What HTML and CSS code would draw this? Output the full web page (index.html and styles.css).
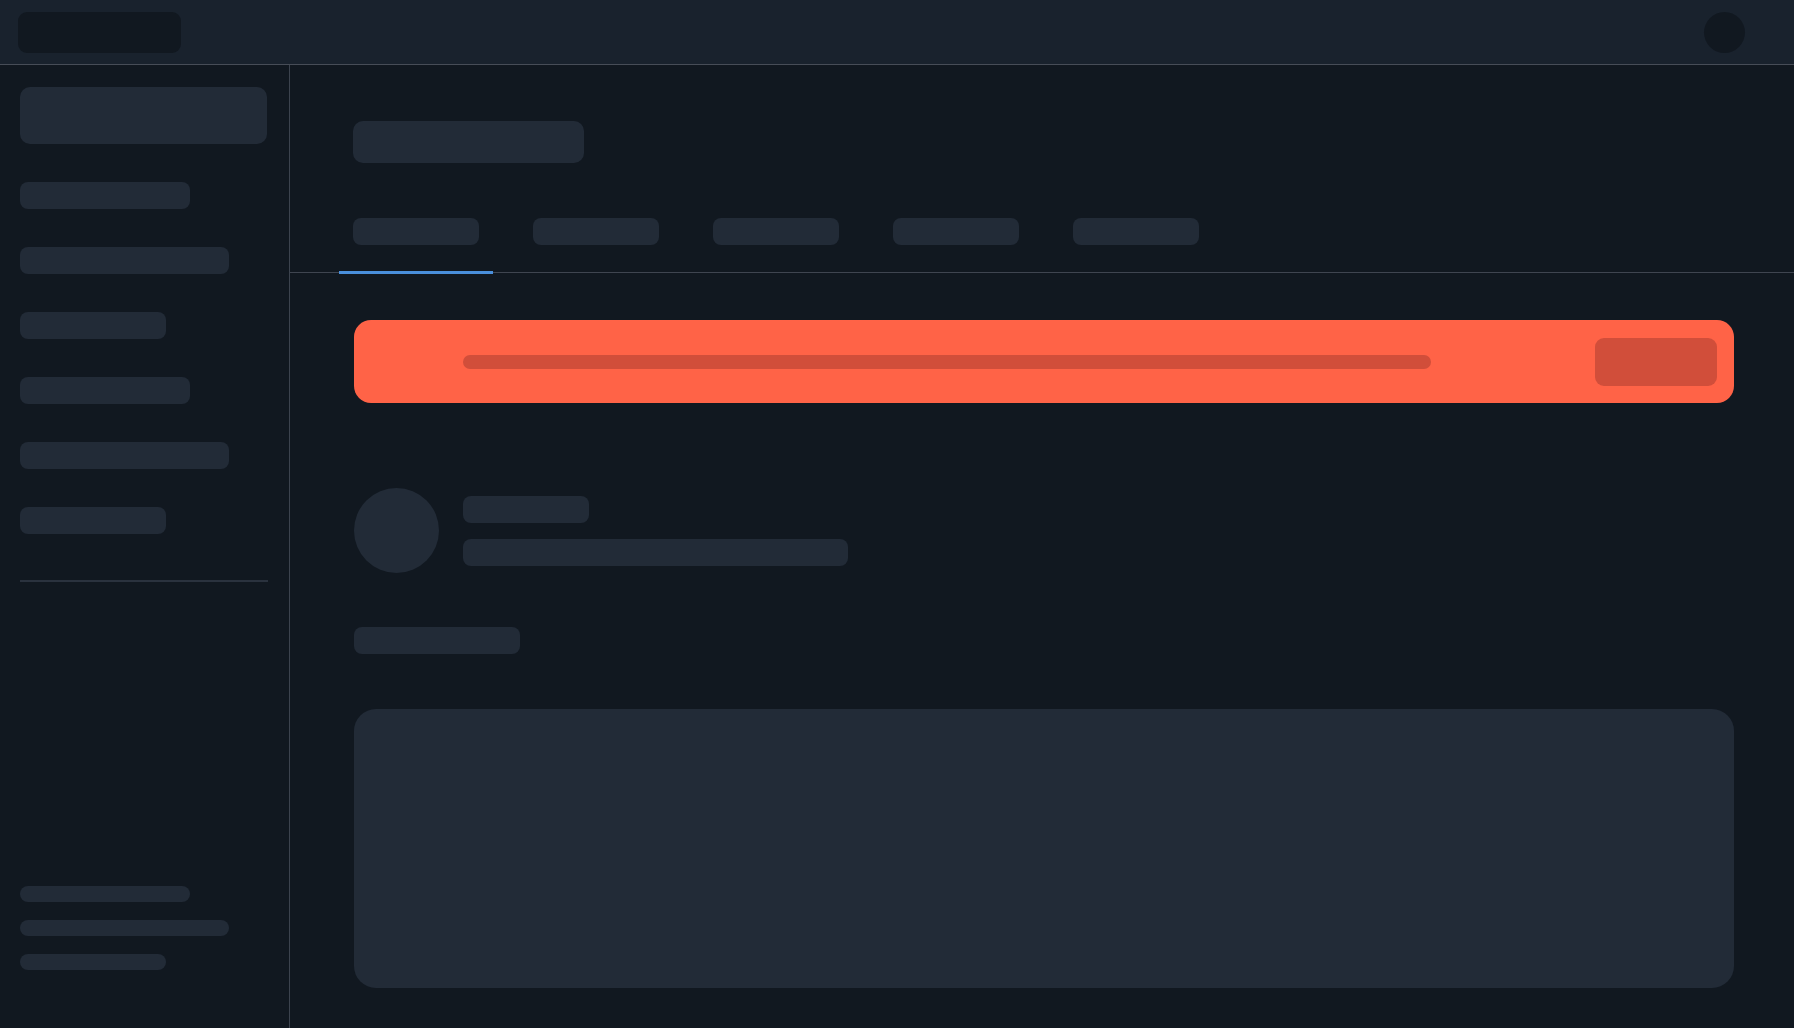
FILE: index.html
```html
<!DOCTYPE html>
<html lang="en">
<head>
<meta charset="utf-8">
<title>Loading</title>
<link rel="stylesheet" href="styles.css">
</head>
<body>
<div class="app">
  <header class="topbar">
    <div class="logo-sk"></div>
    <div class="avatar-sk"></div>
  </header>
  <div class="layout">
    <aside class="sidebar">
      <div class="side-block"></div>
      <nav class="side-nav">
        <div class="sk side-item w70"></div>
        <div class="sk side-item w85"></div>
        <div class="sk side-item w60"></div>
        <div class="sk side-item w70"></div>
        <div class="sk side-item w85"></div>
        <div class="sk side-item w60"></div>
      </nav>
      <div class="side-divider"></div>
      <div class="side-foot">
        <div class="sk foot-item w70"></div>
        <div class="sk foot-item w85"></div>
        <div class="sk foot-item w60"></div>
      </div>
    </aside>
    <main class="main">
      <div class="page-head">
        <div class="sk title-sk"></div>
      </div>
      <div class="tabs">
        <div class="tab active"><div class="sk tab-sk"></div></div>
        <div class="tab"><div class="sk tab-sk"></div></div>
        <div class="tab"><div class="sk tab-sk"></div></div>
        <div class="tab"><div class="sk tab-sk"></div></div>
        <div class="tab"><div class="sk tab-sk"></div></div>
      </div>
      <div class="content">
        <div class="banner">
          <div class="banner-line"></div>
          <div class="banner-btn"></div>
        </div>
        <div class="profile">
          <div class="sk profile-avatar"></div>
          <div class="profile-text">
            <div class="sk name-sk"></div>
            <div class="sk desc-sk"></div>
          </div>
        </div>
        <div class="sk section-sk"></div>
        <div class="sk card-sk"></div>
      </div>
    </main>
  </div>
</div>
</body>
</html>
```

FILE: styles.css
```css
* { box-sizing: border-box; }
html, body { margin: 0; padding: 0; }
body {
  background: #111820;
  font-family: "Inter", "Liberation Sans", sans-serif;
  width: 1794px;
  height: 1028px;
  overflow: hidden;
}
.app { display: flex; flex-direction: column; height: 1028px; }

.topbar {
  height: 65px;
  flex: 0 0 65px;
  background: #19222d;
  border-bottom: 1px solid #474d57;
  display: flex;
  align-items: center;
  justify-content: space-between;
  padding: 0 49px 0 18px;
}
.logo-sk { width: 163px; height: 41px; border-radius: 9px; background: #111820; }
.avatar-sk { width: 41px; height: 41px; border-radius: 50%; background: #111820; }

.layout { flex: 1; display: flex; min-height: 0; }

.sk { background: #222b37; }

.sidebar {
  width: 290px;
  flex: 0 0 290px;
  border-right: 1px solid #3c434e;
  padding: 22px 22px 58px 20px;
  display: flex;
  flex-direction: column;
}
.side-block { height: 57px; border-radius: 10px; background: #222b37; }
.side-nav { display: flex; flex-direction: column; gap: 38px; margin-top: 38px; }
.side-item { height: 27px; border-radius: 8px; }
.w70 { width: 170px; }
.w85 { width: 209px; }
.w60 { width: 146px; }
.side-divider { height: 2px; background: #2a323e; margin-top: 46px; width: 248px; }
.side-foot { margin-top: auto; display: flex; flex-direction: column; gap: 18px; }
.foot-item { height: 16px; border-radius: 8px; }

.main { flex: 1; display: flex; flex-direction: column; min-width: 0; }
.page-head { padding: 56px 60px 0 63px; }
.title-sk { width: 231px; height: 42px; border-radius: 10px; }

.tabs {
  margin-top: 55px;
  display: flex;
  gap: 26px;
  padding-left: 49px;
  border-bottom: 1px solid #3f4550;
}
.tab { position: relative; padding: 0 14px 27px; }
.tab-sk { width: 126px; height: 27px; border-radius: 8px; }
.tab.active::after {
  content: "";
  position: absolute;
  left: 0;
  right: 0;
  bottom: -2px;
  height: 3px;
  background: #4a8fdb;
}

.content { padding: 47px 60px 0 64px; display: flex; flex-direction: column; }

.banner {
  height: 83px;
  border-radius: 17px;
  background: #ff6347;
  display: flex;
  align-items: center;
  justify-content: space-between;
  padding: 0 17px 0 109px;
}
.banner-line { width: 968px; height: 14px; border-radius: 7px; background: #d14e3a; }
.banner-btn { width: 122px; height: 48px; border-radius: 9px; background: #d14e3a; }

.profile { margin-top: 85px; display: flex; align-items: center; gap: 24px; }
.profile-avatar { width: 85px; height: 85px; border-radius: 50%; flex: 0 0 85px; }
.profile-text { display: flex; flex-direction: column; gap: 16px; padding-top: 1px; }
.name-sk { width: 126px; height: 27px; border-radius: 8px; }
.desc-sk { width: 385px; height: 27px; border-radius: 8px; }

.section-sk { margin-top: 54px; width: 166px; height: 27px; border-radius: 8px; }
.card-sk { margin-top: 55px; height: 279px; border-radius: 22px; }
```
